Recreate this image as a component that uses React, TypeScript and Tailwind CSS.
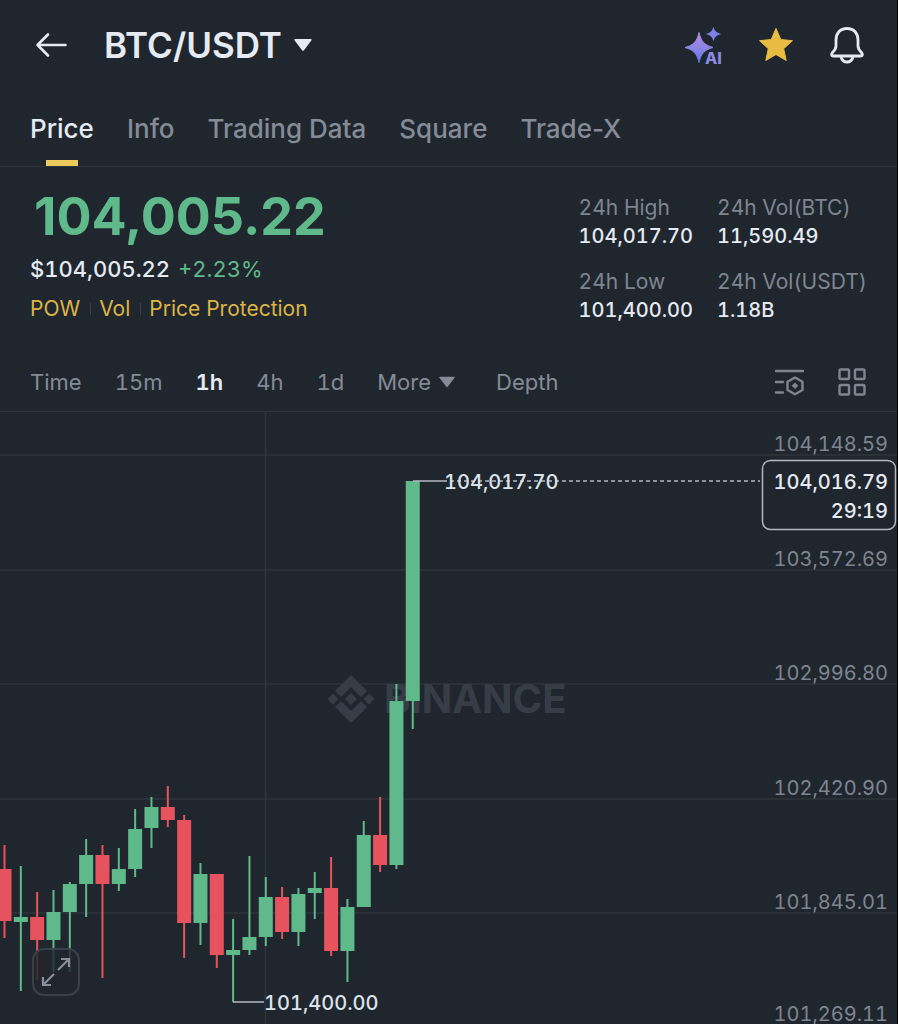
const tabs = ['Price', 'Info', 'Trading Data', 'Square', 'Trade-X'];
const tags = ['POW', 'Vol', 'Price Protection'];

const stats = [
  { label: '24h High', value: '104,017.70' },
  { label: '24h Vol(BTC)', value: '11,590.49' },
  { label: '24h Low', value: '101,400.00' },
  { label: '24h Vol(USDT)', value: '1.18B' },
];

const UP = '#5fb98a';
const DOWN = '#e6535f';

// [up, high, body top, body bottom, low] in chart units
const candles: [boolean, number, number, number, number][] = [
  [false, 433, 457, 509, 526],
  [true, 454, 505, 510, 579],
  [false, 480, 505, 528, 568],
  [true, 478, 500, 528, 560],
  [true, 470, 472, 500, 560],
  [true, 427, 443, 472, 505],
  [false, 433, 443, 472, 566],
  [true, 436, 457, 472, 479],
  [true, 397, 417, 457, 465],
  [true, 385, 395, 416, 436],
  [false, 374, 395, 408, 415],
  [false, 403, 408, 511, 546],
  [true, 451, 462, 511, 533],
  [false, 462, 462, 543, 556],
  [true, 507, 538, 543, 590],
  [true, 444, 525, 538, 543],
  [true, 465, 485, 525, 534],
  [false, 475, 485, 520, 527],
  [true, 476, 482, 520, 534],
  [true, 460, 476, 481, 507],
  [false, 445, 476, 539, 544],
  [true, 487, 495, 539, 570],
  [true, 409, 423, 495, 495],
  [false, 385, 423, 453, 460],
  [true, 272, 289, 453, 457],
  [true, 69, 69, 289, 317],
];

const priceLevels = [
  { price: '104,148.59', y: 39 },
  { price: '103,572.69', y: 154 },
  { price: '102,996.80', y: 268 },
  { price: '102,420.90', y: 383 },
  { price: '101,845.01', y: 497 },
  { price: '101,269.11', y: 609 },
];

function BackIcon() {
  return (
    <svg width="36" height="26" viewBox="0 0 36 26" fill="none" stroke="#e6eaf2" strokeWidth="2.6" strokeLinecap="round" strokeLinejoin="round" aria-hidden="true">
      <path d="M5.500 13H33.500M16 2.500L5.500 13L16 23.500" />
    </svg>
  );
}

function AiIcon() {
  return (
    <svg className="overflow-visible" width="44" height="44" viewBox="0 0 44 44" aria-hidden="true">
      <defs>
        <linearGradient id="spark" x1="0" y1="0" x2="0" y2="1">
          <stop offset="0%" stopColor="#b48be0" />
          <stop offset="55%" stopColor="#8a83e6" />
          <stop offset="100%" stopColor="#5b74e8" />
        </linearGradient>
      </defs>
      <path d="M20 9.500C22 18 25 22 34 24.500C25 27 22 31 20 39.500C18 31 15 27 6 24.500C15 22 18 18 20 9.500Z" fill="url(#spark)" stroke="url(#spark)" strokeLinejoin="round" />
      <path d="M34.500 3.500C35.500 8 37.500 10 42.500 11C37.500 12 35.500 14 34.500 18.500C33.500 14 31.500 12 26.500 11C31.500 10 33.500 8 34.500 3.500Z" fill="#7f7fe8" />
      <text x="26" y="41" fontSize="16" fontWeight="800" fill="#8d88e0" stroke="#20262e" strokeWidth="3" paintOrder="stroke">AI</text>
    </svg>
  );
}

function BellIcon() {
  return (
    <svg width="36" height="38" viewBox="0 0 36 38" fill="none" stroke="#e6eaf2" strokeWidth="2.8" strokeLinejoin="round" aria-hidden="true">
      <path d="M18 2.500C11 2.500 7 7.500 7 14V20C7 23 5.500 24.500 3.500 26.500C2.200 28 2.300 30 4 30H32C33.700 30 33.800 28 32.500 26.500C30.500 24.500 29 23 29 20V14C29 7.500 25 2.500 18 2.500Z" />
      <path d="M12 31C13 34.500 15 36 18 36S23 34.500 24 31" />
    </svg>
  );
}

function SettingsIcon() {
  return (
    <svg width="32" height="30" viewBox="0 0 32 30" fill="none" stroke="#7f8590" strokeWidth="2.400" strokeLinecap="round" aria-hidden="true">
      <path d="M3 4H30M3 15H10M3 25.500H10" />
      <path d="M22 10.500L29.500 14.700V23L22 27.200L14.500 23V14.700Z" strokeLinejoin="round" />
      <path d="M22 15.500L25.300 18.800L22 22.100L18.700 18.800Z" fill="#7f8590" stroke="none" />
    </svg>
  );
}

function GridIcon() {
  return (
    <svg width="30" height="30" viewBox="0 0 30 30" fill="none" stroke="#7f8590" strokeWidth="2.400" aria-hidden="true">
      <rect x="2.500" y="2.500" width="9.500" height="9.500" rx="1" />
      <rect x="18" y="2.500" width="9.500" height="9.500" rx="1" />
      <rect x="2.500" y="18" width="9.500" height="9.500" rx="1" />
      <rect x="18" y="18" width="9.500" height="9.500" rx="1" />
    </svg>
  );
}

function Caret({ className }: { className: string }) {
  return (
    <svg className={className} viewBox="0 0 18 12" fill="currentColor" aria-hidden="true">
      <path d="M1.500 0H16.500Q18.500 0 17.300 1.600L10 11.200Q9 12.400 8 11.200L0.700 1.600Q-0.500 0 1.500 0Z" />
    </svg>
  );
}

function CandleChart() {
  return (
    <svg className="block w-full tabular-nums" viewBox="0 0 897 612" role="img" aria-label="BTC/USDT 1h">
      {/* grid */}
      <g stroke="#2e343d" strokeWidth="1.500">
        {[43, 158, 272, 387, 501].map(y => (
          <line key={y} x1="0" x2="897" y1={y} y2={y} />
        ))}
        <line x1="265.500" x2="265.500" y1="0" y2="612" />
      </g>

      {/* watermark */}
      <g fill="#373d47">
        <path d="M351 263L367 279L361 285L351 275L341 285L335 279Z" />
        <path d="M351 311L367 295L361 289L351 299L341 289L335 295Z" />
        <path d="M351 281L357 287L351 293L345 287Z" />
        <path d="M333 281.500L338.500 287L333 292.500L327.500 287Z" />
        <path d="M369 281.500L374.500 287L369 292.500L363.500 287Z" />
        <text x="384" y="301" fontSize="40" fontWeight="700">BINANCE</text>
      </g>

      {/* candles */}
      {candles.map(([up, high, top, bottom, low], i) => {
        const x = 4.5 + i * 16.33;
        return (
          <g key={i} fill={up ? UP : DOWN}>
            <rect x={x - 1} y={high} width="2" height={low - high} />
            <rect x={x - 7} y={top} width="14" height={bottom - top} />
          </g>
        );
      })}

      {/* high / low markers */}
      <g stroke="#b4b8c0" strokeWidth="1.500" fill="none">
        <path d="M413 69H443" />
        <path d="M233 590H264" />
        <path d="M443 69H760" strokeDasharray="4 3" />
      </g>
      <g fill="#dde1e9" fontSize="20" fontWeight="500">
        <text x="444" y="77">104,017.70</text>
        <text x="264" y="598">101,400.00</text>
      </g>

      {/* price axis */}
      <g fill="#7f8590" fontSize="20" textAnchor="end">
        {priceLevels.map(level => (
          <text key={level.price} x="888" y={level.y}>{level.price}</text>
        ))}
      </g>
      <rect x="762.500" y="48.500" width="133" height="69" rx="8" fill="#20262e" stroke="#b4b8c0" strokeWidth="1.500" />
      <g fill="#e6eaf2" fontSize="20" fontWeight="500" textAnchor="end">
        <text x="888" y="77">104,016.79</text>
        <text x="888" y="106">29:19</text>
      </g>
    </svg>
  );
}

export default function App() {
  return (
    <div className="min-h-screen overflow-hidden border-r border-black bg-[#20262e] font-['Inter','Liberation_Sans',sans-serif] text-[#e6eaf2]">
      <header className="flex h-[90px] items-center justify-between px-8">
        <div className="flex items-center">
          <button aria-label="Back"><BackIcon /></button>
          <button className="ml-9 flex items-center gap-3 text-[35px] font-semibold leading-10">
            BTC/USDT
            <Caret className="h-3 w-[18px]" />
          </button>
        </div>
        <div className="flex items-center gap-[35px]">
          <button aria-label="AI"><AiIcon /></button>
          <button aria-label="Favorite">
            <svg width="36" height="36" viewBox="0 0 36 36" fill="#e8bb41" stroke="#e8bb41" strokeWidth="1" strokeLinejoin="round" aria-hidden="true">
              <path d="M18 1.500L22.800 12.500L34.500 13.700L25.700 21.700L28.200 33.500L18 27.500L7.800 33.500L10.300 21.700L1.500 13.700L13.200 12.500Z" />
            </svg>
          </button>
          <button aria-label="Alerts"><BellIcon /></button>
        </div>
      </header>

      <nav className="flex h-[77px] gap-[33px] border-b border-[#2e343d] px-[30px] text-[26px] font-medium text-[#858b96]">
        {tabs.map((tab, i) => (
          <a key={tab} href="#" className={i === 0 ? 'flex flex-col items-center justify-between text-[#e6eaf2]' : 'flex flex-col'}>
            <span className="pt-[21px] leading-9">{tab}</span>
            {i === 0 && <span className="h-[6px] w-8 bg-[#eccb5c]" />}
          </a>
        ))}
      </nav>

      <section className="flex h-[186px] justify-between px-[30px] pt-6">
        <div>
          <div className="pl-1 text-[52px] font-bold leading-[52px] text-[#5fb98a]">104,005.22</div>
          <div className="mt-[10px] flex gap-2 text-[22px] font-medium leading-8 tabular-nums">
            <span>$104,005.22</span>
            <span className="font-normal text-[#5fb98a]">+2.23%</span>
          </div>
          <div className="mt-2 flex items-center text-[21px] leading-8 text-[#dcb546]">
            {tags.map((tag, i) => (
              <span key={tag} className={i ? 'ml-[10px] flex items-center gap-2 before:h-3 before:w-px before:bg-[#3a404a]' : ''}>{tag}</span>
            ))}
          </div>
        </div>
        <dl className="grid grid-cols-[auto_auto] content-start gap-x-6 gap-y-[18px] pt-[3px] text-[21px] tabular-nums">
          {stats.map(s => (
            <div key={s.label}>
              <dt className="leading-7 text-[#7f8590]">{s.label}</dt>
              <dd className="text-[20px] font-medium leading-7">{s.value}</dd>
            </div>
          ))}
        </dl>
      </section>

      <div className="flex h-[59px] items-center border-b border-[#2e343d] px-[30px] text-[22px] text-[#858b96]">
        <div className="flex items-center gap-[33px] tabular-nums">
          <button>Time</button>
          <button>15m</button>
          <button className="font-semibold text-[#e6eaf2]">1h</button>
          <button>4h</button>
          <button>1d</button>
          <button className="flex items-center gap-2">
            More
            <Caret className="h-3 w-4" />
          </button>
          <button className="ml-2">Depth</button>
        </div>
        <div className="ml-auto flex items-center gap-8">
          <button aria-label="Chart settings"><SettingsIcon /></button>
          <button aria-label="Layout"><GridIcon /></button>
        </div>
      </div>

      <div className="relative">
        <CandleChart />
        <button aria-label="Expand chart" className="absolute bottom-7 left-8 flex h-12 w-12 items-center justify-center rounded-xl border-2 border-[#3a404a] bg-[#20262e]/80">
          <svg width="30" height="30" viewBox="0 0 30 30" fill="none" stroke="#8a909b" strokeWidth="2.200" aria-hidden="true">
            <path d="M17 13L28 2M20 2H28V10M13 17L2 28M2 20V28H10" />
          </svg>
        </button>
      </div>
    </div>
  );
}
